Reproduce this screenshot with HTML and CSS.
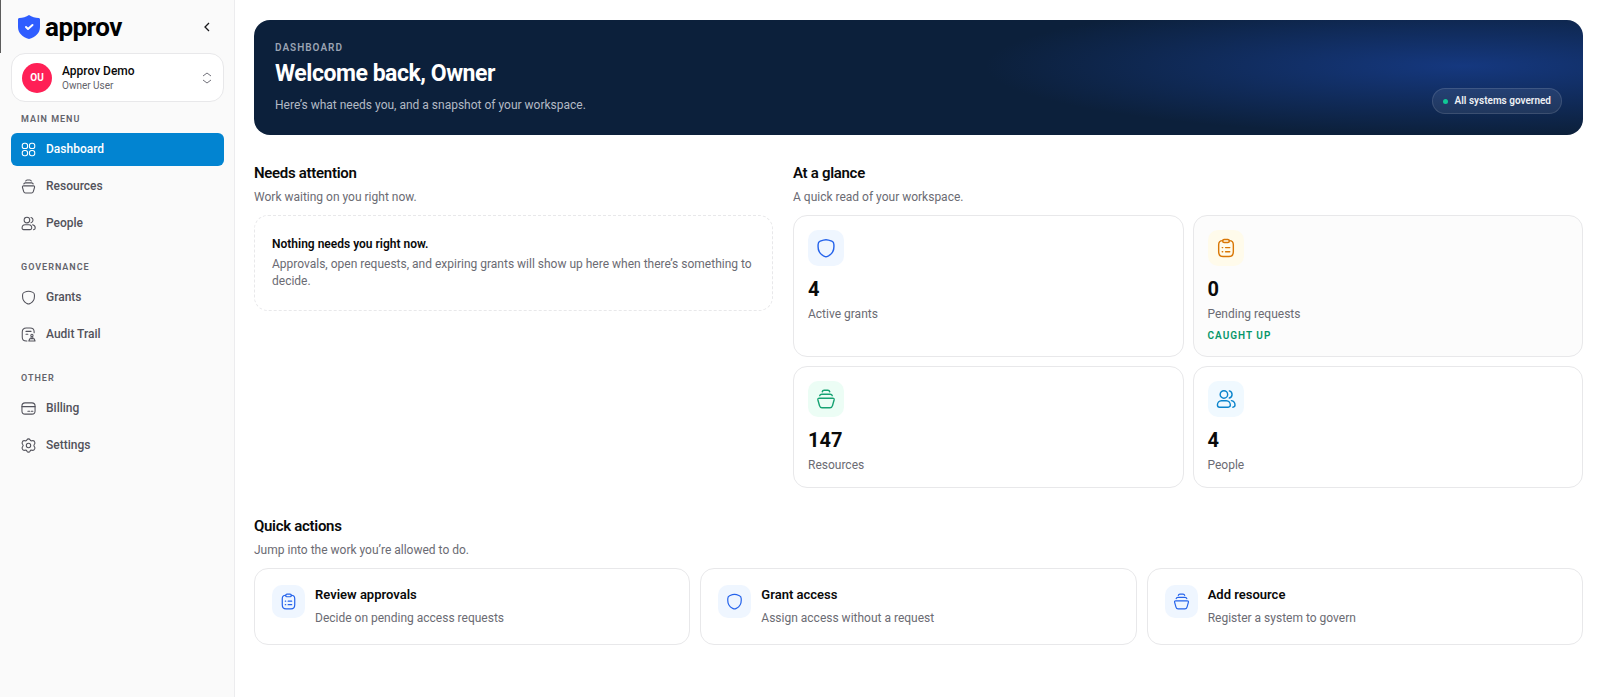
FILE: index.html
```html
<!DOCTYPE html>
<html lang="en">
<head>
    <meta charset="UTF-8">
    <meta name="viewport" content="width=device-width, initial-scale=1.0">
    <title>Dashboard - approv</title>
    <link rel="stylesheet" href="styles.css">
</head>
<body>
    <!-- Shared icons -->
    <svg class="sprite" aria-hidden="true">
        <symbol id="i-shield" viewBox="0 0 24 24">
            <path d="M2.500 10.500V8c0-2.200.5-3.400 2.500-4.200C7 3 9.500 2 12 2s5 1 7 1.800c2 .8 2.500 2 2.500 4.200v2.500c0 6.500-3.500 9.300-6.500 10.900-1.200.6-2 1.100-3 1.100s-1.800-.5-3-1.100c-3-1.600-6.500-4.400-6.500-10.900z"/>
        </symbol>
        <symbol id="i-grid" viewBox="0 0 24 24">
            <rect x="2" y="2" width="8.500" height="8.500" rx="3.500"/>
            <rect x="13.500" y="2" width="8.500" height="8.500" rx="3.500"/>
            <rect x="2" y="13.500" width="8.500" height="8.500" rx="3.500"/>
            <rect x="13.500" y="13.500" width="8.500" height="8.500" rx="3.500"/>
        </symbol>
        <symbol id="i-stack" viewBox="0 0 24 24">
            <path d="M4 11h16c1.400 0 2 .8 1.700 2.200l-1.900 6.700c-.5 1.800-1.300 2.600-3 2.600H7.200c-1.700 0-2.500-.8-3-2.600l-1.900-6.700C2 11.800 2.600 11 4 11z"/>
            <path d="M4.500 8c.3-1.200 1.200-1.800 2.500-1.800h10c1.300 0 2.200.6 2.500 1.800"/>
            <path d="M7.500 3.300c.3-1.200 1-1.800 2.300-1.800h4.400c1.300 0 2 .6 2.300 1.800"/>
        </symbol>
        <symbol id="i-people" viewBox="0 0 24 24">
            <circle cx="9.500" cy="6.500" r="4.500"/>
            <path d="M16 2.300a4.400 4.400 0 0 1 0 8.500"/>
            <path d="M6.500 14h6c2.700 0 4.700 2.500 4.700 5.300 0 1.600-.9 2.500-2.500 2.500H4.200c-1.600 0-2.500-.9-2.500-2.500C1.700 16.500 3.800 14 6.500 14z"/>
            <path d="M18.500 14c2.400.4 4.300 2.700 4.300 5.300 0 1.600-.9 2.500-2.600 2.500"/>
        </symbol>
        <symbol id="i-clipboard" viewBox="0 0 24 24">
            <path d="M8 3.200c-3.300.1-4.800 1.400-4.800 4.800v8.500c0 4.300 1.500 5.800 5.300 5.800h7c3.800 0 5.300-1.500 5.300-5.800V8c0-3.400-1.500-4.700-4.800-4.800"/>
            <rect x="8" y="1.700" width="8" height="3.600" rx="1.800"/>
            <path d="M7.500 11.500h.5M11.500 11.500h5M7.500 16.500h.5M11.500 16.500h5"/>
        </symbol>
        <symbol id="i-audit" viewBox="0 0 24 24">
            <path d="M9.500 22.500H8.500c-4.500 0-6.500-1.500-6.500-6V8c0-4.500 2-6.500 6.500-6.500h6c4.500 0 6.500 2 6.500 6v1.500"/>
            <path d="M8 7h8M8 11.500h3"/>
            <circle cx="17.500" cy="13.500" r="1.800"/>
            <path d="M16.500 15.500l-.8 3h3.600l-.8-3M14 18.800h7l1.500 3.700h-10z"/>
        </symbol>
        <symbol id="i-card" viewBox="0 0 24 24">
            <rect x="1.500" y="3" width="21" height="18" rx="5"/>
            <path d="M1.500 9h21M11 16.500h3M16.500 16.500h2.500"/>
        </symbol>
        <symbol id="i-gear" viewBox="0 0 24 24">
            <circle cx="12" cy="12" r="3.500"/>
            <path d="M9.600 2.800c.9-1.900 3.900-1.900 4.800 0 .5 1.400 1.900 2 3.300 1.600 2.100-.6 3.900.8 4.400 2.500.5 1.500.1 2.300-.7 3.200-1 1-1 2.800 0 3.800.8.9 1.200 1.700.7 3.200-.5 1.700-2.300 3.100-4.400 2.500-1.400-.4-2.800.2-3.300 1.600-.9 1.900-3.900 1.900-4.800 0-.5-1.400-1.900-2-3.300-1.600-2.100.6-3.900-.8-4.400-2.500-.5-1.500-.1-2.300.7-3.200 1-1 1-2.800 0-3.800-.8-.9-1.200-1.700-.7-3.200.5-1.700 2.300-3.100 4.400-2.500 1.400.4 2.800-.2 3.300-1.600z"/>
        </symbol>
    </svg>

    <div class="layout">
        <aside class="sidebar">
            <div class="brand">
                <a class="logo" href="#">
                    <svg class="logo-mark" viewBox="0 0 22 24" aria-hidden="true">
                        <path fill="#2f5dff" d="M11 0c2.800 2 6.500 3 9.500 3 .9 0 1.500.6 1.500 1.500V12c0 6-4.500 10-11 12C4.500 22 0 18 0 12V4.500C0 3.600.6 3 1.500 3 4.500 3 8.200 2 11 0z"/>
                        <path fill="none" stroke="#fff" stroke-width="2" stroke-linecap="round" stroke-linejoin="round" d="M8 12l2 2 4.500-4"/>
                    </svg>
                    <span>approv</span>
                </a>
                <button class="collapse" type="button" aria-label="Collapse sidebar">
                    <svg viewBox="0 0 10 10"><path d="M7 1L3 5l4 4"/></svg>
                </button>
            </div>

            <button class="workspace" type="button">
                <span class="avatar">OU</span>
                <span class="workspace-text">
                    <span class="workspace-name">Approv Demo</span>
                    <span class="workspace-user">Owner User</span>
                </span>
                <svg class="updown" viewBox="0 0 10 12"><path d="M1 4l4-3 4 3M1 8l4 3 4-3"/></svg>
            </button>

            <nav class="menu">
                <h2 class="menu-label">Main menu</h2>
                <a class="menu-item active" href="#"><svg class="icon"><use href="#i-grid"/></svg>Dashboard</a>
                <a class="menu-item" href="#"><svg class="icon"><use href="#i-stack"/></svg>Resources</a>
                <a class="menu-item" href="#"><svg class="icon"><use href="#i-people"/></svg>People</a>

                <h2 class="menu-label">Governance</h2>
                <a class="menu-item" href="#"><svg class="icon"><use href="#i-shield"/></svg>Grants</a>
                <a class="menu-item" href="#"><svg class="icon"><use href="#i-audit"/></svg>Audit Trail</a>

                <h2 class="menu-label">Other</h2>
                <a class="menu-item" href="#"><svg class="icon"><use href="#i-card"/></svg>Billing</a>
                <a class="menu-item" href="#"><svg class="icon"><use href="#i-gear"/></svg>Settings</a>
            </nav>
        </aside>

        <main class="content">
            <header class="hero">
                <div>
                    <p class="hero-label">Dashboard</p>
                    <h1>Welcome back, Owner</h1>
                    <p class="hero-text">Here’s what needs you, and a snapshot of your workspace.</p>
                </div>
                <span class="status">All systems governed</span>
            </header>

            <div class="columns">
                <section>
                    <h2 class="section-title">Needs attention</h2>
                    <p class="section-text">Work waiting on you right now.</p>
                    <div class="empty">
                        <h3>Nothing needs you right now.</h3>
                        <p>Approvals, open requests, and expiring grants will show up here when there’s something to decide.</p>
                    </div>
                </section>

                <section>
                    <h2 class="section-title">At a glance</h2>
                    <p class="section-text">A quick read of your workspace.</p>
                    <div class="stats">
                        <a class="stat" href="#">
                            <span class="tile blue"><svg class="icon"><use href="#i-shield"/></svg></span>
                            <strong>4</strong>
                            <span class="stat-label">Active grants</span>
                        </a>
                        <a class="stat quiet" href="#">
                            <span class="tile amber"><svg class="icon"><use href="#i-clipboard"/></svg></span>
                            <strong>0</strong>
                            <span class="stat-label">Pending requests</span>
                            <span class="stat-note">Caught up</span>
                        </a>
                        <a class="stat" href="#">
                            <span class="tile green"><svg class="icon"><use href="#i-stack"/></svg></span>
                            <strong>147</strong>
                            <span class="stat-label">Resources</span>
                        </a>
                        <a class="stat" href="#">
                            <span class="tile sky"><svg class="icon"><use href="#i-people"/></svg></span>
                            <strong>4</strong>
                            <span class="stat-label">People</span>
                        </a>
                    </div>
                </section>
            </div>

            <section>
                <h2 class="section-title">Quick actions</h2>
                <p class="section-text">Jump into the work you’re allowed to do.</p>
                <div class="actions">
                    <a class="action" href="#">
                        <span class="tile small blue"><svg class="icon"><use href="#i-clipboard"/></svg></span>
                        <span>
                            <span class="action-title">Review approvals</span>
                            <span class="action-text">Decide on pending access requests</span>
                        </span>
                    </a>
                    <a class="action" href="#">
                        <span class="tile small blue"><svg class="icon"><use href="#i-shield"/></svg></span>
                        <span>
                            <span class="action-title">Grant access</span>
                            <span class="action-text">Assign access without a request</span>
                        </span>
                    </a>
                    <a class="action" href="#">
                        <span class="tile small blue"><svg class="icon"><use href="#i-stack"/></svg></span>
                        <span>
                            <span class="action-title">Add resource</span>
                            <span class="action-text">Register a system to govern</span>
                        </span>
                    </a>
                </div>
            </section>
        </main>
    </div>
</body>
</html>
```
FILE: styles.css
```css
* {
    box-sizing: border-box;
}
body {
    margin: 0;
    font-family: Roboto, "Liberation Sans", sans-serif;
    font-size: 12px;
    line-height: 17px;
    color: #0a0a0a;
    background: #fff;
}
h1, h2, h3, p {
    margin: 0;
}
a {
    color: inherit;
    text-decoration: none;
}
button {
    font: inherit;
    color: inherit;
    cursor: pointer;
}
.sprite {
    position: absolute;
    width: 0;
    height: 0;
}
.icon {
    width: 15px;
    height: 15px;
    flex: none;
    fill: none;
    stroke: currentColor;
    stroke-width: 1.7;
    stroke-linecap: round;
    stroke-linejoin: round;
}
.layout {
    display: flex;
    min-height: 100vh;
}

/* Sidebar */
.sidebar {
    width: 235px;
    flex: none;
    background: #fafafa;
    border-right: 1px solid #ececee;
}
.brand {
    display: flex;
    align-items: center;
    justify-content: space-between;
    height: 53px;
    padding: 0 17px;
    border-left: 1px solid #5c5c5c;
}
.logo {
    display: flex;
    align-items: center;
    gap: 5px;
    font-size: 26px;
    line-height: 30px;
    font-weight: 700;
    color: #000;
    letter-spacing: -0.02em;
}
.logo-mark {
    width: 22px;
    height: 24px;
}
.collapse {
    display: flex;
    padding: 5px;
    border: 0;
    background: none;
}
.collapse svg {
    width: 10px;
    height: 10px;
    fill: none;
    stroke: #18181b;
    stroke-width: 1.3;
}
.workspace {
    display: flex;
    align-items: center;
    gap: 10px;
    width: 213px;
    height: 49px;
    margin: 0 11px;
    padding: 0 11px 0 10px;
    border: 1px solid #e8e8ea;
    border-radius: 14px;
    background: #fff;
    text-align: left;
}
.avatar {
    width: 30px;
    height: 30px;
    border-radius: 50%;
    background: #ff2056;
    color: #fff;
    font-size: 10px;
    line-height: 30px;
    font-weight: 700;
    text-align: center;
}
.workspace-text {
    flex: 1;
}
.workspace-name, .workspace-user {
    display: block;
}
.workspace-name {
    font-weight: 500;
    line-height: 16px;
}
.workspace-user {
    font-size: 10px;
    line-height: 13px;
    color: #63636b;
}
.updown {
    width: 10px;
    height: 12px;
    fill: none;
    stroke: #71717a;
}
.menu {
    display: flex;
    flex-direction: column;
    gap: 4px;
    padding: 10px 10px 10px 11px;
}
.menu-label {
    margin: 16px 0 3px;
    padding-left: 10px;
    font-size: 9px;
    line-height: 14px;
    font-weight: 600;
    letter-spacing: 1px;
    text-transform: uppercase;
    color: #63636b;
}
.menu-label:first-child {
    margin-top: 0;
}
.menu-item {
    display: flex;
    align-items: center;
    gap: 10px;
    height: 33px;
    padding: 0 10px;
    border-radius: 6px;
    font-weight: 500;
    color: #52525b;
}
.menu-item.active {
    background: #0284d1;
    color: #fff;
}

/* Content */
.content {
    flex: 1;
    min-width: 0;
    display: flex;
    flex-direction: column;
    gap: 28px;
    padding: 20px 17px 20px 19px;
}
.hero {
    display: flex;
    align-items: flex-end;
    justify-content: space-between;
    padding: 21px;
    border-radius: 16px;
    background: radial-gradient(ellipse 36% 60% at 91% 40%, #15387f, rgba(21, 56, 127, 0)), #0c203b;
    color: #fff;
}
.hero-label {
    font-size: 10px;
    line-height: 14px;
    font-weight: 600;
    letter-spacing: 1px;
    text-transform: uppercase;
    color: #9ba4b3;
}
.hero h1 {
    margin: 4px 0 8px;
    font-size: 23px;
    line-height: 30px;
    font-weight: 700;
    letter-spacing: -0.02em;
}
.hero-text {
    color: #b3bac5;
}
.status {
    display: flex;
    align-items: center;
    gap: 7px;
    padding: 4px 10px;
    border: 1px solid rgba(255, 255, 255, 0.12);
    border-radius: 13px;
    background: rgba(255, 255, 255, 0.08);
    font-size: 10px;
    line-height: 16px;
    font-weight: 600;
    color: #eef0f4;
}
.status::before {
    content: "";
    width: 5px;
    height: 5px;
    border-radius: 50%;
    background: #10c896;
}
.columns {
    display: grid;
    grid-template-columns: 519fr 790fr;
    gap: 20px;
}
.section-title {
    margin-bottom: 6px;
    font-size: 15px;
    line-height: 20px;
    font-weight: 600;
    letter-spacing: -0.02em;
}
.section-text {
    margin-bottom: 9px;
    color: #6b6b73;
}
.empty {
    padding: 20px 17px;
    border: 1px dashed #e8e8ea;
    border-radius: 14px;
}
.empty h3 {
    margin-bottom: 3px;
    font-size: 12px;
    line-height: 17px;
    font-weight: 600;
}
.empty p {
    color: #6b6b73;
}
.stats {
    display: grid;
    grid-template-columns: 1fr 1fr;
    gap: 9px;
}
.stat {
    display: flex;
    flex-direction: column;
    align-items: flex-start;
    padding: 14px 14px 13px;
    border: 1px solid #e8e8ea;
    border-radius: 14px;
}
.stat.quiet {
    background: #fcfcfc;
}
.tile {
    display: flex;
    align-items: center;
    justify-content: center;
    width: 36px;
    height: 36px;
    flex: none;
    border-radius: 10px;
}
.tile .icon {
    width: 20px;
    height: 20px;
}
.tile.small {
    width: 33px;
    height: 33px;
}
.tile.small .icon {
    width: 17px;
    height: 17px;
}
.blue {
    background: #eff6ff;
    color: #2563eb;
}
.amber {
    background: #fffbeb;
    color: #d97706;
}
.green {
    background: #ecfdf5;
    color: #16a272;
}
.sky {
    background: #f0f9ff;
    color: #0b84cc;
}
.stat strong {
    margin: 11px 0 5px;
    font-size: 20px;
    line-height: 24px;
    font-weight: 700;
}
.stat-label {
    color: #6b6b73;
}
.stat-note {
    margin-top: 6px;
    font-size: 10px;
    line-height: 14px;
    font-weight: 600;
    letter-spacing: 1px;
    text-transform: uppercase;
    color: #059669;
}
.actions {
    display: grid;
    grid-template-columns: repeat(3, 1fr);
    gap: 10px;
}
.action {
    display: flex;
    gap: 10px;
    padding: 16px 17px 17px;
    border: 1px solid #e8e8ea;
    border-radius: 14px;
}
.action-title, .action-text {
    display: block;
}
.action-title {
    margin-bottom: 5px;
    font-size: 13px;
    line-height: 20px;
    font-weight: 600;
}
.action-text {
    color: #6b6b73;
}

@media (max-width: 900px) {
    .columns, .actions {
        grid-template-columns: 1fr;
    }
}
```
